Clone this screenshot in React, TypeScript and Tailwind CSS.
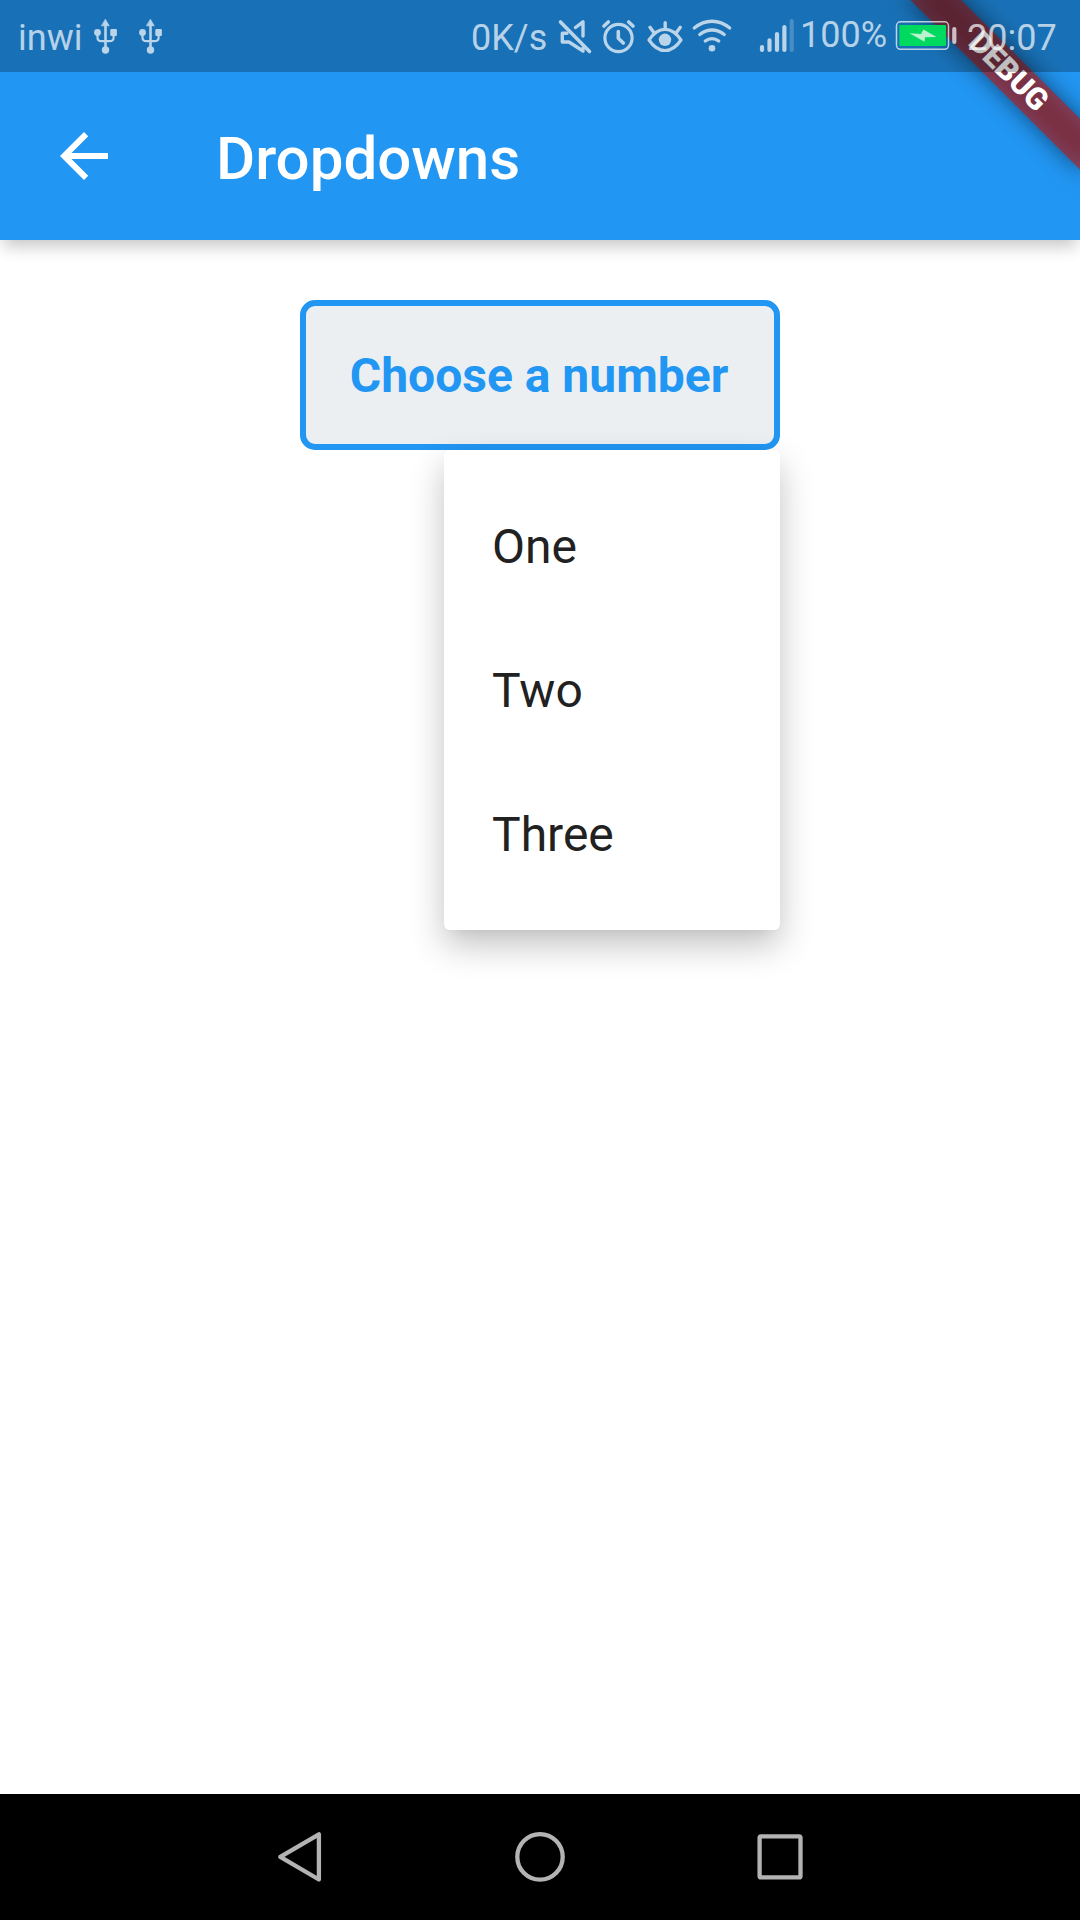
import type { ReactNode } from "react";

const ICON = "#BAD4E9";

function Icon({ box, className, children }: { box: string; className: string; children: ReactNode }) {
  return (
    <svg viewBox={box} className={`shrink-0 ${className}`} fill="none" stroke={ICON} strokeLinecap="round" strokeLinejoin="round">
      {children}
    </svg>
  );
}

function Usb({ className }: { className: string }) {
  return (
    <Icon box="94 19 24 36" className={`h-9 w-6 ${className}`}>
      <path d="M105.5 24V50" strokeWidth="2.6" />
      <path d="M97.5 34V37.5Q97.5 41.2 101.5 41.2H109.5Q113.6 41.2 113.6 37.5V34" strokeWidth="2.2" />
      <path d="M105.5 19.6L109.2 25.8H101.8Z" fill={ICON} strokeWidth="0.8" />
      <circle cx="97.5" cy="32.5" r="3.4" fill={ICON} stroke="none" />
      <rect x="110.3" y="29" width="6.6" height="7" rx="1" fill={ICON} stroke="none" />
      <circle cx="105.5" cy="50" r="3.7" fill={ICON} stroke="none" />
    </Icon>
  );
}

function StatusBar() {
  return (
    <div className="absolute inset-x-0 top-0 z-20 flex h-[72px] items-start bg-black/25 text-[36px] leading-[42px] text-white/70">
      <span className="ml-[18px] mt-[17px] w-[76px]">inwi</span>
      <Usb className="mt-[19px]" />
      <Usb className="ml-[21px] mt-[19px]" />
      <span className="ml-[308px] mt-[17px] w-[85px]">0K/s</span>
      <Icon box="556 16 38 40" className="mt-4 h-10 w-[38px]">
        <path d="M560.5 22L589.5 51.5" strokeWidth="3.6" />
        <path d="M575.5 27.5L583 21.8V36" strokeWidth="3.4" />
        <path d="M567 33.2H562.3V42H569L583 51V48" strokeWidth="3.4" />
      </Icon>
      <Icon box="600 16 38 40" className="ml-[6px] mt-4 h-10 w-[38px]">
        <circle cx="618.5" cy="38" r="13.6" strokeWidth="3.2" />
        <path d="M618.3 31.5V38.3L623.3 43" strokeWidth="3.6" />
        <path d="M604 26L608.3 22M633 26L628.7 22" strokeWidth="3.6" />
      </Icon>
      <Icon box="645 16 40 40" className="ml-[7px] mt-4 h-10 w-10">
        <path d="M649 40Q656 29.3 665 29.3Q674 29.3 681 40Q674 50.5 665 50.5Q656 50.5 649 40Z" strokeWidth="3.2" />
        <circle cx="665" cy="39.8" r="6.2" fill={ICON} stroke="none" />
        <path d="M665.2 22.8V29M650 27.3L653.8 32.5M680.3 27.3L676.5 32.5" strokeWidth="3.4" />
      </Icon>
      <Icon box="690 16 44 40" className="ml-[5px] mt-4 h-10 w-11">
        <path d="M694.3 28Q702.5 21.2 712 21.2T729.7 28" strokeWidth="3.4" />
        <path d="M699.8 34.5Q705.5 30 712 30T724.2 34.5" strokeWidth="3.4" />
        <path d="M705.3 41Q708.5 38.6 712 38.6T718.7 41" strokeWidth="3.4" />
        <circle cx="712" cy="48.2" r="3.3" fill={ICON} stroke="none" />
      </Icon>
      <Icon box="758 16 38 40" className="ml-[24px] mt-4 h-10 w-[38px]">
        <path d="M762 47V50M769.5 40.3V50M777 34V50M784.4 27V50" strokeWidth="4.2" />
        <path d="M791.7 21V50" strokeWidth="4.2" opacity=".3" />
      </Icon>
      <span className="ml-[4px] mt-[14px] w-[94px]">100%</span>
      <Icon box="894 18 64 36" className="mt-[18px] h-9 w-16">
        <rect x="896.5" y="21.8" width="52" height="27.5" rx="4" stroke="white" strokeOpacity=".7" strokeWidth="1.5" />
        <rect x="899.3" y="25" width="46.8" height="21" rx="1" fill="#00D95F" stroke="none" />
        <path d="M909.5 33.3L921 34L923.5 29.5L936.5 37L925 37.3L924.5 41.7Z" fill="#B8F2CE" stroke="none" />
        <path d="M954.3 29V42" stroke="white" strokeOpacity=".7" strokeWidth="4.2" />
      </Icon>
      <span className="ml-[9px] mt-[17px]">20:07</span>
    </div>
  );
}

function DebugBanner() {
  return (
    <div className="pointer-events-none absolute right-0 top-0 z-10 h-60 w-60 overflow-hidden">
      <div className="absolute left-[120px] top-[84px] h-9 w-60 origin-[120px_-84px] rotate-45">
        <div className="absolute inset-0 bg-black/50 blur-[11.9px]" />
        <div className="absolute inset-0 flex items-center justify-center bg-[#B71C1C]/63 pb-px text-[30.6px] font-black leading-none text-white">
          DEBUG
        </div>
      </div>
    </div>
  );
}

function AppBar() {
  return (
    <header className="relative flex h-60 shrink-0 items-end bg-[#2196F3] shadow-[0_9px_16px_-3px_rgba(0,0,0,0.23)]">
      <div className="flex h-[168px] items-center">
        <svg viewBox="0 0 24 24" className="ml-12 h-[72px] w-[72px]" fill="white">
          <path d="M20 11H7.83l5.59-5.59L12 4l-8 8 8 8 1.41-1.41L7.83 13H20v-2z" />
        </svg>
        <h1 className="ml-24 pt-1.5 text-[60px] font-medium leading-[70px] text-white">Dropdowns</h1>
      </div>
    </header>
  );
}

const OPTIONS = ["One", "Two", "Three"];

function Dropdown() {
  return (
    <div className="relative mx-auto mt-[60px] w-[480px]">
      <button className="flex h-[150px] w-full items-center justify-center rounded-[15px] border-[6px] border-[#2196F3] bg-[#EBEFF2] pr-[2px] pt-[2px] text-[48px] font-bold text-[#2196F3]">
        Choose a number
      </button>
      <ul className="absolute right-0 top-full w-[336px] rounded-[6px] bg-white py-6 text-[48px] text-[#212121] shadow-[0_15px_34px_rgba(0,0,0,0.24),0_9px_12px_-9px_rgba(0,0,0,0.07)]">
        {OPTIONS.map((option) => (
          <li key={option} className="flex h-36 items-center pl-12 pt-[2px]">
            {option}
          </li>
        ))}
      </ul>
    </div>
  );
}

function NavigationBar() {
  return (
    <nav className="flex h-[126px] shrink-0 items-center justify-center gap-[180px] bg-black">
      <svg viewBox="0 0 60 60" className="h-[60px] w-[60px]" fill="none" stroke="#B3B3B3" strokeWidth="4.3" strokeLinejoin="round">
        <path d="M10.3 29.9L48.9 7.3V52.5Z" />
      </svg>
      <svg viewBox="0 0 60 60" className="h-[60px] w-[60px]" fill="none" stroke="#B3B3B3" strokeWidth="4.3">
        <circle cx="30" cy="29.9" r="22.7" />
      </svg>
      <svg viewBox="0 0 60 60" className="h-[60px] w-[60px]" fill="none" stroke="#B3B3B3" strokeWidth="4.3" strokeLinejoin="round">
        <rect x="9.6" y="9.3" width="40.9" height="41.1" rx="1.5" />
      </svg>
    </nav>
  );
}

export default function App() {
  return (
    <div className="relative flex h-[1920px] w-[1080px] flex-col overflow-hidden bg-white font-[Roboto,sans-serif]">
      <StatusBar />
      <DebugBanner />
      <AppBar />
      <main className="flex-1">
        <Dropdown />
      </main>
      <NavigationBar />
    </div>
  );
}
